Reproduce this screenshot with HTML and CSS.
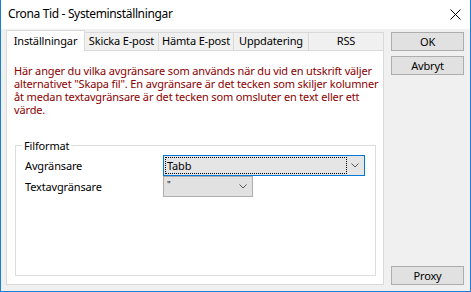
FILE: index.html
```html
<!DOCTYPE html>
<html lang="sv">
<head>
<meta charset="utf-8">
<title>Crona Tid - Systeminställningar</title>
<link rel="stylesheet" href="styles.css">
</head>
<body>
<div class="window">
  <div class="titlebar">
    <span class="title">Crona Tid - Systeminställningar</span>
    <svg class="close" width="11" height="11" viewBox="0 0 11 11"><path d="M0.5 0.5 L10.5 10.5 M10.5 0.5 L0.5 10.5" stroke="#000" stroke-width="1" fill="none"/></svg>
  </div>
  <div class="client">
    <div class="tabs">
      <div class="tabstrip">
        <div class="tab selected">Inställningar</div>
        <div class="tab t74">Skicka E-post</div>
        <div class="tab">Hämta E-post</div>
        <div class="tab">Uppdatering</div>
        <div class="tab">RSS</div>
      </div>
      <div class="panel">
        <p class="desc">Här anger du vilka avgränsare som används när du vid en utskrift väljer<br>alternativet "Skapa fil". En avgränsare är det tecken som skiljer kolumner<br>åt medan textavgränsare är det tecken som omsluter en text eller ett<br>värde.</p>
        <fieldset class="group">
          <legend class="legend">Filformat</legend>
          <div class="row first">
            <span class="label">Avgränsare</span>
            <div class="combo focused wide">
              <span class="focusrect">Tabb</span>
              <svg class="chev" width="8" height="5" viewBox="0 0 8 5"><path d="M0.5 0.5 L4 4 L7.5 0.5" stroke="#555" stroke-width="1" fill="none"/></svg>
            </div>
          </div>
          <div class="row">
            <span class="label">Textavgränsare</span>
            <div class="combo narrow">
              <span class="val">"</span>
              <svg class="chev" width="8" height="5" viewBox="0 0 8 5"><path d="M0.5 0.5 L4 4 L7.5 0.5" stroke="#555" stroke-width="1" fill="none"/></svg>
            </div>
          </div>
        </fieldset>
      </div>
    </div>
    <div class="buttons">
      <button class="btn">OK</button>
      <button class="btn">Avbryt</button>
      <div class="spacer"></div>
      <button class="btn">Proxy</button>
    </div>
  </div>
</div>
</body>
</html>
```

FILE: styles.css
```css
html, body {
  margin: 0;
  padding: 0;
  background: #ffffff;
}
body {
  font-family: "Noto Sans", "Liberation Sans", sans-serif;
  font-size: 11px;
  letter-spacing: -0.15px;
  color: #000;
}
.window {
  box-sizing: border-box;
  width: 471px;
  height: 292px;
  border-left: 1px solid #1a7fd3;
  border-right: 1px solid #1a7fd3;
  border-bottom: 1px solid #1a7fd3;
  display: flex;
  flex-direction: column;
}
.titlebar {
  height: 29px;
  flex: 0 0 29px;
  background: #ffffff;
  display: flex;
  align-items: center;
  padding-left: 7px;
  padding-right: 9px;
}
.title {
  flex: 1;
  line-height: 14px;
  margin-top: -1px;
  font-size: 12px;
  letter-spacing: -0.35px;
}
.close {
  display: block;
  margin-top: -1px;
}
.client {
  flex: 1;
  background: #f0f0f0;
  display: flex;
  padding: 1px 6px 6px 5px;
}
.tabs {
  width: 378px;
  display: flex;
  flex-direction: column;
}
.tabstrip {
  height: 20px;
  flex: 0 0 20px;
  display: flex;
  align-items: flex-end;
  position: relative;
  z-index: 1;
}
.tab {
  box-sizing: border-box;
  width: 75px;
  height: 18px;
  border-top: 1px solid #d9d9d9;
  border-right: 1px solid #d9d9d9;
  background: #f0f0f0;
  text-align: center;
  line-height: 16px;
  white-space: nowrap;
}
.tab.t74 {
  width: 74px;
}
.tab.selected {
  width: 79px;
  height: 21px;
  margin-bottom: -1px;
  border-left: 1px solid #d9d9d9;
  background: #ffffff;
  line-height: 19px;
}
.panel {
  flex: 1;
  background: #ffffff;
  border: 1px solid #d9d9d9;
  display: flex;
  flex-direction: column;
  padding-top: 13px;
}
.desc {
  margin: 0;
  padding-left: 7px;
  line-height: 13px;
  color: #8b0000;
  white-space: nowrap;
}
.group {
  flex: 1;
  margin: 23px 7px 8px 8px;
  padding: 0;
  border: 1px solid #dcdcdc;
  min-width: 0;
}
.legend {
  margin-left: 6px;
  padding: 0 2px;
  line-height: 13px;
}
.row {
  display: flex;
  align-items: center;
  height: 21px;
}
.row.first {
  margin-top: 3px;
}
.label {
  width: 138px;
  padding-left: 9px;
  flex: 0 0 auto;
}
.combo {
  box-sizing: border-box;
  height: 21px;
  border: 1px solid #adadad;
  background: #e1e1e1;
  display: flex;
  align-items: center;
  justify-content: space-between;
  padding-right: 5px;
}
.combo.wide {
  width: 202px;
}
.combo.narrow {
  width: 90px;
}
.combo.focused {
  border-color: #0078d7;
  background: #e5e5e5;
}
.focusrect {
  box-sizing: border-box;
  width: 182px;
  height: 17px;
  margin-left: 1px;
  border: 1px dotted #000;
  padding-left: 1px;
  line-height: 15px;
}
.val {
  padding-left: 3px;
  line-height: 15px;
  align-self: flex-start;
  font-size: 9px;
}
.chev {
  display: block;
}
.buttons {
  width: 73px;
  margin-left: 7px;
  display: flex;
  flex-direction: column;
  padding-top: 2px;
}
.btn {
  box-sizing: border-box;
  height: 19px;
  margin: 0 0 5px 0;
  padding: 0;
  border: 1px solid #adadad;
  background: #e1e1e1;
  font-family: inherit;
  font-size: 11px;
  letter-spacing: -0.15px;
  line-height: 16px;
  color: #000;
}
.spacer {
  flex: 1;
}
.buttons .btn:last-child {
  margin-bottom: 0;
}
```
